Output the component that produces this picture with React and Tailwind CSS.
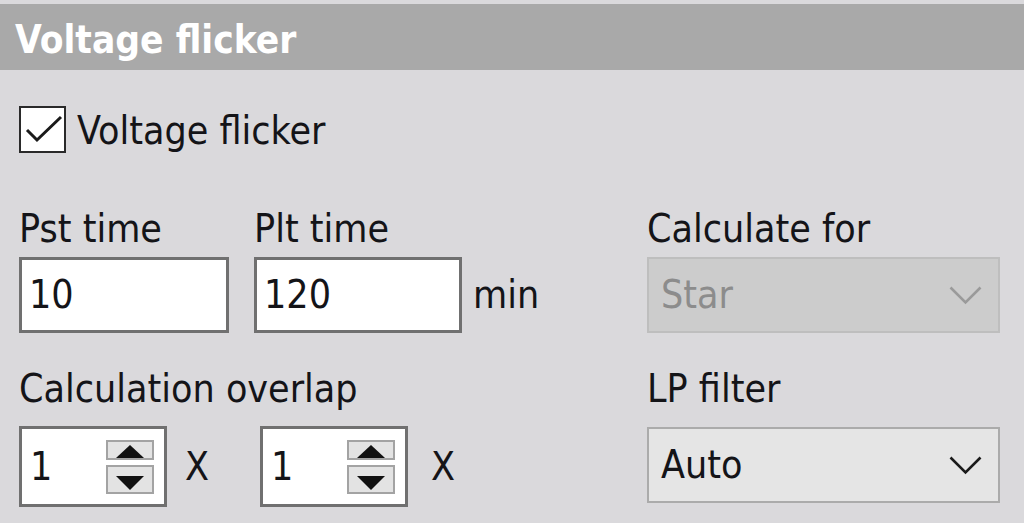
import React from "react";

const FONT = "font-['DejaVu_Sans_Condensed','DejaVu_Sans',sans-serif] font-stretch-condensed";

function Chevron({ color }) {
  return (
    <svg width="33" height="19" viewBox="0 0 33 19" className="shrink-0">
      <path d="M1.5 1.5 L16.5 16.5 L31.5 1.5" fill="none" stroke={color} strokeWidth="2.6" />
    </svg>
  );
}

function SpinButtons() {
  return (
    <div className="flex flex-col gap-[5px] mr-[10px]">
      <div className="w-[48px] h-[20px] border-2 border-[#a3a3a3] bg-[#e3e3e3] flex items-end justify-center">
        <svg width="28" height="13" viewBox="0 0 28 13">
          <path d="M14 0 L28 13 L0 13 Z" fill="#111" />
        </svg>
      </div>
      <div className="w-[48px] h-[29px] border-2 border-[#a3a3a3] bg-[#e3e3e3] flex items-start justify-center pt-[9px]">
        <svg width="28" height="14" viewBox="0 0 28 14">
          <path d="M0 0 L28 0 L14 14 Z" fill="#111" />
        </svg>
      </div>
    </div>
  );
}

function Spinner({ value, pl }) {
  return (
    <div className="w-[148px] h-[81px] border-[3px] border-[#707070] bg-white flex items-center">
      <span className={`leading-[44px] ${pl}`}>{value}</span>
      <div className="ml-auto">
        <SpinButtons />
      </div>
    </div>
  );
}

export default function App() {
  return (
    <div className={`w-[1024px] h-[523px] bg-[#dad9dc] pt-[4px] overflow-hidden text-[39px] text-[#141418] ${FONT}`}>
      <div className="h-[66px] bg-[#a9a9a9] pl-[15px] pt-[14px]">
        <div className="text-[38.5px] font-bold text-white leading-[44px]">Voltage flicker</div>
      </div>

      <div className="pl-[19px] pr-[24px]">
        <div className="mt-[36px] flex items-start">
          <div className="w-[47px] h-[47px] border-2 border-[#2a2a2a] bg-white shrink-0">
            <svg width="43" height="43" viewBox="0 0 43 43">
              <path d="M6 22 L16 32 L40 9" fill="none" stroke="#1a1a1a" strokeWidth="3" />
            </svg>
          </div>
          <span className="ml-[11px] mt-[3px] leading-[44px]">Voltage flicker</span>
        </div>

        <div className="flex justify-between">
          <div className="flex flex-col">
            <div className="mt-[54px] flex">
              <div className="flex flex-col w-[210px]">
                <span className="leading-[44px]">Pst time</span>
                <div className="mt-[6px] h-[76px] border-[3px] border-[#707070] bg-white flex items-center">
                  <span className="leading-[44px] pl-[7px]">10</span>
                </div>
              </div>
              <div className="flex flex-col ml-[25px]">
                <span className="leading-[44px]">Plt time</span>
                <div className="mt-[6px] flex items-center">
                  <div className="w-[208px] h-[76px] border-[3px] border-[#707070] bg-white flex items-center">
                    <span className="leading-[44px] pl-[7px]">120</span>
                  </div>
                  <span className="ml-[11px] leading-[44px]">min</span>
                </div>
              </div>
            </div>

            <div className="mt-[34px] leading-[44px]">Calculation overlap</div>
            <div className="mt-[15px] flex items-center">
              <Spinner value="1" pl="pl-[8px]" />
              <span className="ml-[18px] leading-[44px]">X</span>
              <div className="ml-[51px]">
                <Spinner value="1" pl="pl-[8px]" />
              </div>
              <span className="ml-[23px] leading-[44px]">X</span>
            </div>
          </div>

          <div className="flex flex-col w-[353px]">
            <span className="mt-[54px] leading-[44px]">Calculate for</span>
            <div className="mt-[6px] h-[76px] border-2 border-[#bebebe] bg-[#cccccc] flex items-center pl-[12px] pr-[16px]">
              <span className="leading-[44px] text-[#8c8c8c]">Star</span>
              <div className="ml-auto">
                <Chevron color="#9a9a9a" />
              </div>
            </div>
            <span className="mt-[34px] leading-[44px]">LP filter</span>
            <div className="mt-[16px] h-[76px] border-2 border-[#ababab] bg-[#e5e5e5] flex items-center pl-[12px] pr-[16px]">
              <span className="leading-[44px]">Auto</span>
              <div className="ml-auto">
                <Chevron color="#1a1a1a" />
              </div>
            </div>
          </div>
        </div>
      </div>
    </div>
  );
}
